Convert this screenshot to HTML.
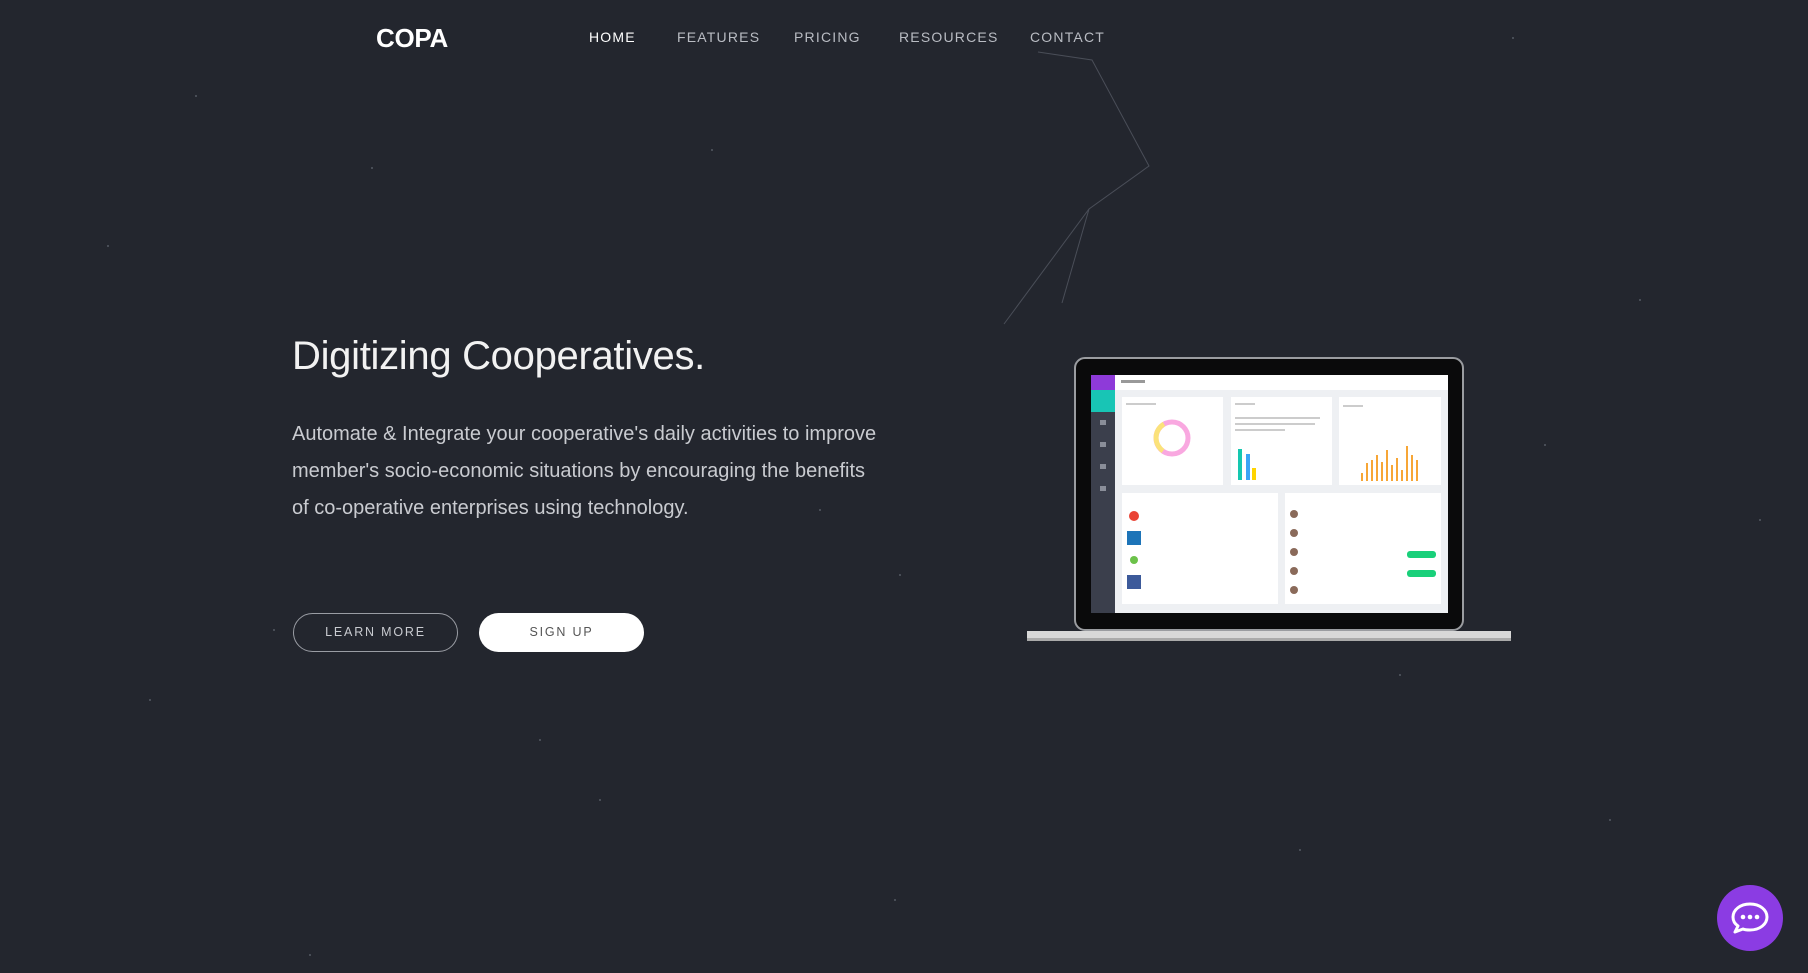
<!DOCTYPE html>
<html><head><meta charset="utf-8"><style>
*{margin:0;padding:0;box-sizing:border-box}
body{width:1808px;height:973px;background:#23262e;overflow:hidden;position:relative;font-family:"Liberation Sans",sans-serif;color:#fff}
.logo{position:absolute;left:376px;top:23px;font-size:26px;font-weight:900;letter-spacing:-0.3px}
.nav a{position:absolute;top:29px;font-size:14px;letter-spacing:1.2px;color:#b9bcc3;text-decoration:none}
h1{position:absolute;left:292px;top:334px;font-size:40px;font-weight:300;color:#f2f2f2;letter-spacing:-0.3px}
p{position:absolute;left:292px;top:416px;width:588px;font-size:20px;line-height:37px;color:#c9cbd0}
.btn{position:absolute;top:613px;width:165px;height:39px;border-radius:20px;font-size:12.5px;letter-spacing:1.8px;text-align:center;line-height:39px}
.b1{left:293px;border:1px solid #9a9da4;color:#c9cbd0;line-height:37px}
.b2{left:479px;background:#fff;color:#555}
.chat{position:absolute;left:1717px;top:885px;width:66px;height:66px;border-radius:50%;background:#8b3ce3}
</style></head><body>
<svg width="1808" height="973" style="position:absolute;left:0;top:0">
<g stroke="#4a4e58" stroke-width="1" fill="none">
<polyline points="1038,52 1092,60 1149,166 1089,209 1004,324"/>
<line x1="1089" y1="209" x2="1062" y2="303"/>
</g>
<g fill="#555a64">
<circle cx="196" cy="96" r="1"/><circle cx="372" cy="168" r="1"/><circle cx="108" cy="246" r="1"/><circle cx="468" cy="470" r="1"/><circle cx="274" cy="630" r="1"/><circle cx="712" cy="150" r="1"/><circle cx="900" cy="575" r="1"/><circle cx="1545" cy="445" r="1"/><circle cx="1640" cy="300" r="1"/><circle cx="1400" cy="675" r="1"/><circle cx="600" cy="800" r="1"/><circle cx="310" cy="955" r="1"/><circle cx="895" cy="900" r="1"/><circle cx="1610" cy="820" r="1"/><circle cx="1760" cy="520" r="1"/><circle cx="1513" cy="38" r="1"/><circle cx="540" cy="740" r="1"/><circle cx="150" cy="700" r="1"/><circle cx="820" cy="510" r="1"/><circle cx="1300" cy="850" r="1"/>
</g>
<rect x="1075" y="358" width="388" height="272" rx="10" fill="#0a0a0b" stroke="#9a9ca0" stroke-width="2"/>
<rect x="1027" y="631" width="484" height="10" fill="#d8d8d8"/>
<rect x="1027" y="638" width="484" height="3" fill="#aaa"/>
<rect x="1091" y="375" width="357" height="238" fill="#eef0f3"/>
<rect x="1091" y="375" width="24" height="238" fill="#3b3f4c"/>
<rect x="1091" y="375" width="24" height="15" fill="#8e3ad9"/>
<rect x="1091" y="390" width="24" height="22" fill="#18c5b5"/>
<g fill="#8a8e99"><rect x="1100" y="420" width="6" height="5"/><rect x="1100" y="442" width="6" height="5"/><rect x="1100" y="464" width="6" height="5"/><rect x="1100" y="486" width="6" height="5"/></g>
<rect x="1115" y="375" width="333" height="15" fill="#fff"/>
<rect x="1121" y="380" width="24" height="3" fill="#999"/>
<rect x="1122" y="397" width="101" height="88" fill="#fff"/>
<rect x="1231" y="397" width="101" height="88" fill="#fff"/>
<rect x="1339" y="397" width="102" height="88" fill="#fff"/>
<g fill="#ccc"><rect x="1126" y="403" width="30" height="2"/><rect x="1235" y="403" width="20" height="2"/><rect x="1343" y="405" width="20" height="2"/><rect x="1235" y="417" width="85" height="2"/><rect x="1235" y="423" width="80" height="2"/><rect x="1235" y="429" width="50" height="2"/><rect x="1126" y="496" width="25" height="2"/><rect x="1289" y="496" width="30" height="2"/>
<rect x="1146" y="512" width="50" height="2"/><rect x="1146" y="535" width="65" height="2"/><rect x="1146" y="557" width="50" height="2"/><rect x="1146" y="579" width="55" height="2"/>
<rect x="1302" y="510" width="28" height="2"/><rect x="1302" y="529" width="25" height="2"/><rect x="1302" y="548" width="25" height="2"/><rect x="1302" y="567" width="22" height="2"/><rect x="1302" y="586" width="22" height="2"/></g>
<circle cx="1172" cy="438" r="16" fill="none" stroke="#f9a8e0" stroke-width="5"/>
<path d="M1163 451 A16 16 0 0 1 1164 424" fill="none" stroke="#fbe27a" stroke-width="5"/>
<rect x="1238" y="449" width="4" height="31" fill="#15c8b0"/><rect x="1246" y="454" width="4" height="26" fill="#3ba4f5"/><rect x="1252" y="468" width="4" height="12" fill="#ffd400"/>
<g fill="#f7a636"><rect x="1361" y="473" width="2" height="8"/><rect x="1366" y="463" width="2" height="18"/><rect x="1371" y="460" width="2" height="21"/><rect x="1376" y="455" width="2" height="26"/><rect x="1381" y="462" width="2" height="19"/><rect x="1386" y="450" width="2" height="31"/><rect x="1391" y="465" width="2" height="16"/><rect x="1396" y="458" width="2" height="23"/><rect x="1401" y="470" width="2" height="11"/><rect x="1406" y="446" width="2" height="35"/><rect x="1411" y="455" width="2" height="26"/><rect x="1416" y="460" width="2" height="21"/></g>
<rect x="1122" y="493" width="156" height="111" fill="#fff"/>
<rect x="1285" y="493" width="156" height="111" fill="#fff"/>
<circle cx="1134" cy="516" r="5" fill="#ea4335"/>
<rect x="1127" y="531" width="14" height="14" fill="#1d74b8"/>
<circle cx="1134" cy="560" r="4" fill="#6cc24a"/>
<rect x="1127" y="575" width="14" height="14" fill="#3c5a9a"/>
<g fill="#8a6a5a"><circle cx="1294" cy="514" r="4"/><circle cx="1294" cy="533" r="4"/><circle cx="1294" cy="552" r="4"/><circle cx="1294" cy="571" r="4"/><circle cx="1294" cy="590" r="4"/></g>
<rect x="1407" y="551" width="29" height="7" rx="3" fill="#19d07a"/>
<rect x="1407" y="570" width="29" height="7" rx="3" fill="#19d07a"/>
</svg>
<div class="logo">COPA</div>
<div class="nav">
<a style="left:589px;color:#fff">HOME</a><a style="left:677px">FEATURES</a><a style="left:794px">PRICING</a><a style="left:899px">RESOURCES</a><a style="left:1030px">CONTACT</a>
</div>
<h1>Digitizing Cooperatives.</h1>
<p>Automate &amp; Integrate your cooperative's daily activities to improve member's socio-economic situations by encouraging the benefits of co-operative enterprises using technology.</p>
<div class="btn b1">LEARN MORE</div>
<div class="btn b2">SIGN UP</div>
<div class="chat"><svg width="66" height="66" viewBox="0 0 66 66"><path d="M33 19c-10 0-17 6-17 13 0 4 2 7 5 9l-3 6 8-3c2 1 5 1 7 1 10 0 17-6 17-13s-7-13-17-13z" fill="none" stroke="#fff" stroke-width="3" stroke-linejoin="round"/><circle cx="26" cy="32" r="2.3" fill="#fff"/><circle cx="33" cy="32" r="2.3" fill="#fff"/><circle cx="40" cy="32" r="2.3" fill="#fff"/></svg></div>
</body></html>
